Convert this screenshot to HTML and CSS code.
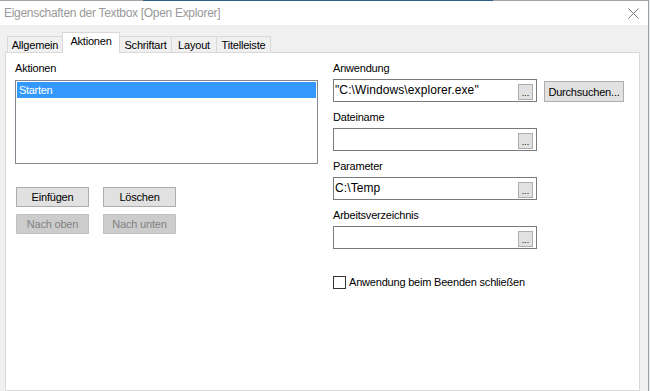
FILE: index.html
```html
<!DOCTYPE html>
<html>
    <head>
        <title>Eigenschaften der Textbox</title>
        <link rel="stylesheet" href="styles.css">
    </head>
    <body>
        <div class='window'>
            <div class='topline'></div>
            <div class='titlebar'>
                <span class='title'>Eigenschaften der Textbox [Open Explorer]</span>
                <svg class='close' width='11' height='11' viewBox='0 0 11 11'>
                    <path d='M0.5 0.5 L10.5 10.5 M10.5 0.5 L0.5 10.5' stroke='#7a7a7a' stroke-width='1' fill='none'/>
                </svg>
            </div>
            <div class='client'>
                <div class='tabs'>
                    <div class='tab t1'>Allgemein</div>
                    <div class='tab t2 selected'>Aktionen</div>
                    <div class='tab t3'>Schriftart</div>
                    <div class='tab t4'>Layout</div>
                    <div class='tab t5'>Titelleiste</div>
                </div>
                <div class='panel'>
                    <div class='col-left'>
                        <div class='label'>Aktionen</div>
                        <div class='listbox'>
                            <div class='item selected-item'>Starten</div>
                        </div>
                        <div class='btnrow first'>
                            <button class='btn'>Einfügen</button>
                            <button class='btn'>Löschen</button>
                        </div>
                        <div class='btnrow'>
                            <button class='btn' disabled>Nach oben</button>
                            <button class='btn' disabled>Nach unten</button>
                        </div>
                    </div>
                    <div class='col-right'>
                        <div class='field'>
                            <div class='label'>Anwendung</div>
                            <div class='fieldrow'>
                                <div class='textbox'>
                                    <span class='value'>"C:\Windows\explorer.exe"</span>
                                    <span class='dots'>...</span>
                                </div>
                                <button class='btn browse'>Durchsuchen...</button>
                            </div>
                        </div>
                        <div class='field'>
                            <div class='label'>Dateiname</div>
                            <div class='fieldrow'>
                                <div class='textbox'>
                                    <span class='value'></span>
                                    <span class='dots'>...</span>
                                </div>
                            </div>
                        </div>
                        <div class='field'>
                            <div class='label'>Parameter</div>
                            <div class='fieldrow'>
                                <div class='textbox'>
                                    <span class='value'>C:\Temp</span>
                                    <span class='dots'>...</span>
                                </div>
                            </div>
                        </div>
                        <div class='field'>
                            <div class='label'>Arbeitsverzeichnis</div>
                            <div class='fieldrow'>
                                <div class='textbox'>
                                    <span class='value'></span>
                                    <span class='dots'>...</span>
                                </div>
                            </div>
                        </div>
                        <div class='check'>
                            <span class='box'></span>
                            <span class='checktext'>Anwendung beim Beenden schließen</span>
                        </div>
                    </div>
                </div>
            </div>
        </div>
    </body>
</html>
```

FILE: styles.css
```css
body{
    margin: 0;
    width: 650px;
    height: 391px;
    overflow: hidden;
    background-color: #eef0f2;
    font-family: "Liberation Sans", Arial, sans-serif;
    font-size: 11px;
    color: #000;
}
.window{
    width: 648px;
    height: 391px;
    border-right: 1px solid #9c9c9c;
    background-color: #f0f0f0;
    display: flex;
    flex-direction: column;
}
.topline{
    height: 1px;
    background: linear-gradient(to right, #a5a5a5 0px, #a5a5a5 143px, #2d5d8c 143px, #2d5d8c 493px, #a5a5a5 493px);
}
.titlebar{
    height: 24px;
    background-color: #fff;
    display: flex;
    align-items: center;
    justify-content: space-between;
    padding: 0 9px 0 4px;
}
.title{
    font-size: 12px;
    color: #999;
    line-height: 24px;
    letter-spacing: -0.3px;
}
.client{
    flex: 1;
    display: flex;
    flex-direction: column;
    padding: 0 8px 0 5px;
}
.tabs{
    height: 27px;
    display: flex;
    align-items: flex-end;
    padding-left: 2px;
}
.tab{
    box-sizing: border-box;
    height: 16px;
    border: 1px solid #d9d9d9;
    border-bottom: none;
    margin-left: -1px;
    text-align: center;
    line-height: 16px;
    letter-spacing: -0.2px;
}
.t1{ width: 56px; margin-left: 0; }
.t2{ width: 58px; }
.t3{ width: 53px; }
.t4{ width: 46px; }
.t5{ width: 55px; }
.tab.selected{
    height: 21px;
    background-color: #fff;
    margin-bottom: -1px;
    position: relative;
    z-index: 1;
    line-height: 16px;
}
.panel{
    flex: 1;
    background-color: #fff;
    border: 1px solid #d9d9d9;
    display: flex;
    padding: 8px 0 0 9px;
}
.label{
    height: 15px;
    line-height: 15px;
    letter-spacing: -0.2px;
}
.col-left{
    width: 303px;
}
.listbox{
    box-sizing: border-box;
    width: 303px;
    height: 84px;
    margin-top: 4px;
    border: 1px solid #828790;
    padding: 1px;
}
.item{
    height: 16px;
    line-height: 16px;
    padding-left: 2px;
    font-size: 11px;
    letter-spacing: -0.3px;
}
.selected-item{
    background-color: #3399ff;
    color: #fff;
}
.btnrow{
    display: flex;
    gap: 14px;
    margin-top: 7px;
    margin-left: 1px;
}
.btnrow.first{
    margin-top: 23px;
}
.btn{
    box-sizing: border-box;
    width: 73px;
    height: 20px;
    padding: 0;
    background-color: #e1e1e1;
    border: 1px solid #adadad;
    font-family: "Liberation Sans", Arial, sans-serif;
    font-size: 11px;
    letter-spacing: -0.2px;
    color: #000;
}
.btn:disabled{
    background-color: #cccccc;
    border-color: #bfbfbf;
    color: #838383;
}
.col-right{
    margin-left: 15px;
    width: 291px;
}
.field{
    margin-top: 8px;
}
.field:first-child{
    margin-top: 0;
}
.fieldrow{
    display: flex;
    margin-top: 3px;
}
.textbox{
    box-sizing: border-box;
    width: 204px;
    height: 23px;
    border: 1px solid #7a7a7a;
    display: flex;
    justify-content: space-between;
    align-items: flex-end;
    padding: 0 3px 1px 1px;
}
.value{
    align-self: center;
    font-size: 12px;
    letter-spacing: 0.1px;
    line-height: 21px;
    white-space: nowrap;
}
.dots{
    box-sizing: border-box;
    width: 15px;
    height: 16px;
    background-color: #e1e1e1;
    border: 1px solid #adadad;
    font-size: 9px;
    line-height: 16px;
    text-align: center;
}
.btn.browse{
    width: 80px;
    height: 21px;
    margin-left: 7px;
    margin-top: 2px;
}
.check{
    display: flex;
    align-items: center;
    height: 15px;
    margin-top: 26px;
}
.box{
    box-sizing: border-box;
    width: 13px;
    height: 13px;
    border: 1px solid #333;
    background-color: #fff;
}
.checktext{
    margin-left: 3px;
    letter-spacing: -0.2px;
    line-height: 15px;
}
```
